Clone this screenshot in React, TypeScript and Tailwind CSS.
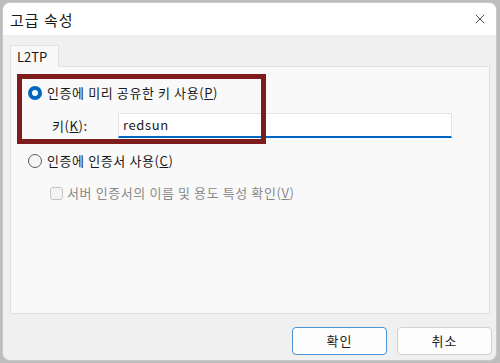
import React from 'react';
import { X } from 'lucide-react';

const font = { fontFamily: '"Noto Sans CJK KR", "Noto Sans", sans-serif' };

const Radio: React.FC<{ checked?: boolean }> = ({ checked }) =>
  checked ? (
    <span className="w-[14px] h-[14px] rounded-full bg-[#0067c0] flex items-center justify-center shrink-0">
      <span className="w-[6px] h-[6px] rounded-full bg-white" />
    </span>
  ) : (
    <span className="w-[14px] h-[14px] rounded-full border border-[#5c5c5c] bg-[#f6f6f6] shrink-0" />
  );

const App: React.FC = () => {
  return (
    <div className="w-[500px] h-[363px] bg-[#bdbdbd] pl-[2px] pt-[2px]" style={font}>
      <div className="w-[495px] h-[359px] rounded-lg bg-[#f0f0f0] flex flex-col overflow-hidden border border-[#c9c9c9] text-[13px] tracking-[0.6px] text-[#1a1a1a]">
        {/* title bar */}
        <div className="h-[32px] bg-white flex items-center justify-between pl-[7px] pr-[8px] shrink-0">
          <span className="text-[15px] tracking-[1px] leading-none">고급 속성</span>
          <X className="w-[16px] h-[16px] text-[#333]" strokeWidth={1.3} />
        </div>

        <div className="flex-1 flex flex-col pl-[7px] pt-[10px]">
          {/* tab */}
          <div className="flex">
            <div className="w-[49px] h-[22px] bg-[#f9f9f9] border border-b-0 border-[#e1e1e1] flex items-center pl-[6px] -mb-px relative z-10 tracking-normal">
              L2TP
            </div>
          </div>
          {/* panel */}
          <div className="relative w-[480px] h-[248px] bg-[#f9f9f9] border border-[#e1e1e1] pt-[16px] pl-[17px]">
            <div className="flex items-center gap-[5px] h-[20px]">
              <Radio checked />
              <span>
                인증에 미리 공유한 키 사용(<span className="underline">P</span>)
              </span>
            </div>
            <div className="flex items-center mt-[10px] pl-[24px]">
              <span className="w-[66px]">
                키(<span className="underline">K</span>):
              </span>
              <div className="w-[334px] h-[25px] bg-white border border-[#e3e3e3] border-b-2 border-b-[#0067c0] flex items-center pl-[4px]">
                redsun
              </div>
            </div>
            <div className="flex items-center gap-[5px] h-[20px] mt-[13px]">
              <Radio />
              <span>
                인증에 인증서 사용(<span className="underline">C</span>)
              </span>
            </div>
            <div className="flex items-center gap-[4px] h-[20px] mt-[12px] pl-[22px] text-[#8a8a8a]">
              <span className="w-[13px] h-[13px] rounded-[3px] border border-[#c4c4c4] bg-[#f3f3f3] shrink-0" />
              <span>
                서버 인증서의 이름 및 용도 특성 확인(<span className="underline">V</span>)
              </span>
            </div>

            {/* annotation box drawn over the content */}
            <div className="absolute left-[6px] top-[7px] w-[249px] h-[70px] border-[5px] border-[#7e1c1c] pointer-events-none" />
          </div>

          {/* buttons */}
          <div className="flex justify-end gap-[10px] mt-[13px] pr-[4px]">
            <button className="w-[95px] h-[28px] rounded-[4px] bg-[#fdfdfd] border border-[#4a93d6] tracking-[1px]">확인</button>
            <button className="w-[95px] h-[28px] rounded-[4px] bg-[#fdfdfd] border border-[#d0d0d0] tracking-[1px]">취소</button>
          </div>
        </div>
      </div>
    </div>
  );
};

export default App;
